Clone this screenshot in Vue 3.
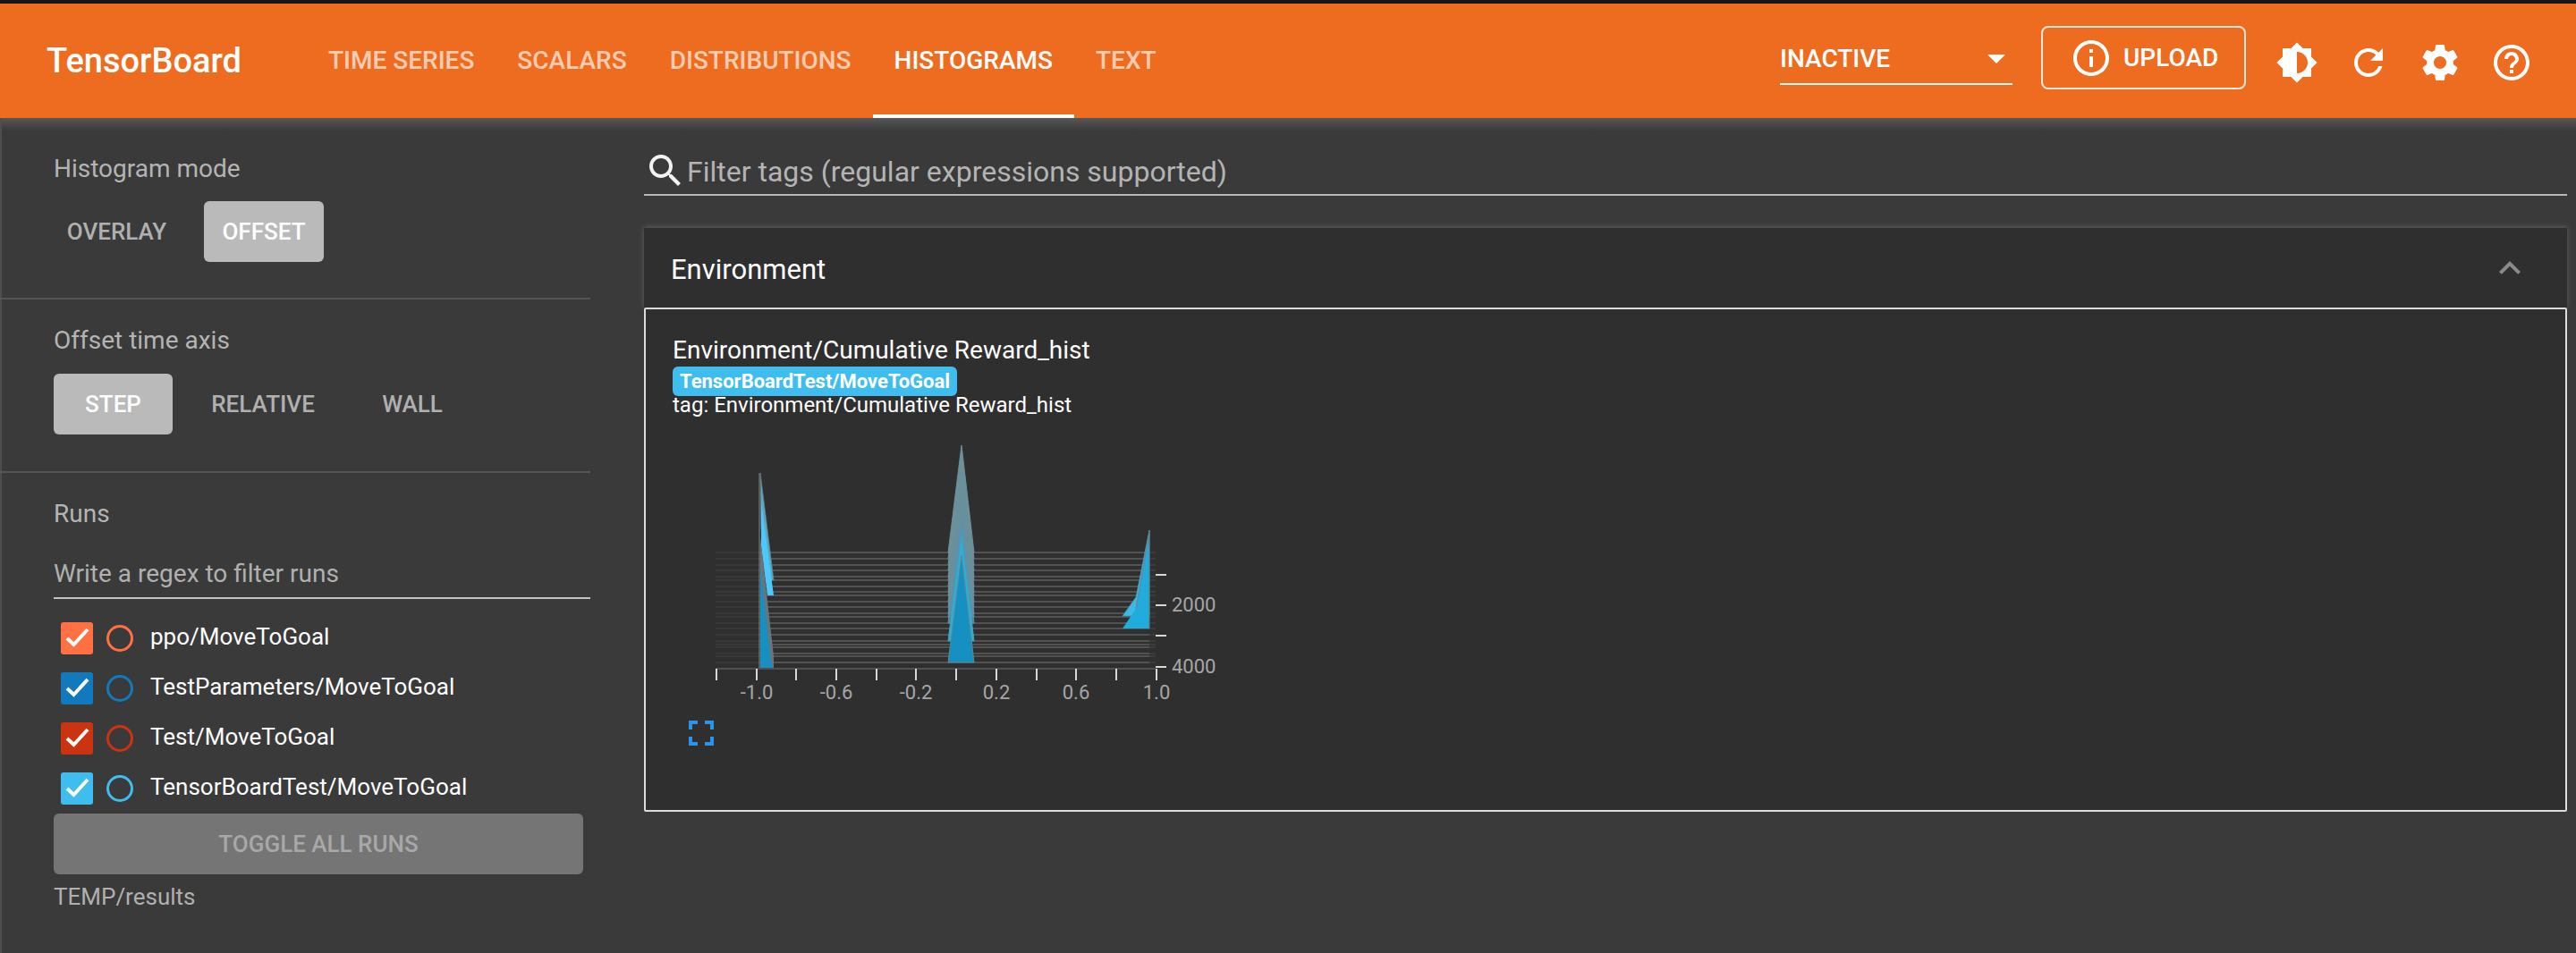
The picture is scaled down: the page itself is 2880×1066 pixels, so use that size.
<script setup>
const tabs = [
  { name: 'TIME SERIES' },
  { name: 'SCALARS' },
  { name: 'DISTRIBUTIONS' },
  { name: 'HISTOGRAMS', active: true },
  { name: 'TEXT' }
]

const runs = [
  { name: 'ppo/MoveToGoal', color: '#ff7043' },
  { name: 'TestParameters/MoveToGoal', color: '#1279bd' },
  { name: 'Test/MoveToGoal', color: '#cc3311' },
  { name: 'TensorBoardTest/MoveToGoal', color: '#3fbdee' }
]

// baselines of each histogram slice, back to front
const baselines = [617, 624, 631, 637, 644, 648, 655, 661, 665, 672, 678, 685, 689, 696, 702, 709, 716, 720, 723, 730, 733, 740, 747]

// back slices are washed out, they get bluer towards the front
const centerBack = baselines.filter(y => y <= 696).map((y, i) => ({
  y,
  points: `1060,${y} 1075,${y - 120} 1089,${y}`,
  fill: `rgb(${114 - i * 3}, ${162 - i}, ${176 + i})`
}))

const xTicks = [801, 846, 890, 935, 980, 1024, 1069, 1114, 1159, 1203, 1248, 1293]
const xLabels = [
  { x: 846, text: '-1.0' },
  { x: 935, text: '-0.6' },
  { x: 1024, text: '-0.2' },
  { x: 1114, text: '0.2' },
  { x: 1203, text: '0.6' },
  { x: 1293, text: '1.0' }
]
const yTicks = [642, 676, 710, 745]
</script>

<template>
  <div class="page">
    <header class="topbar">
      <div class="logo">TensorBoard</div>
      <nav class="tabs">
        <div v-for="tab in tabs" :key="tab.name" class="tab" :class="{ active: tab.active }">{{ tab.name }}</div>
      </nav>
      <div class="topbar-right">
        <div class="plugin-select">
          <span>INACTIVE</span>
          <i class="select-arrow"></i>
        </div>
        <div class="upload-btn">
          <svg class="upload-icon" viewBox="0 0 24 24"><path d="M11 7h2v2h-2zm0 4h2v6h-2zm1-9C6.48 2 2 6.48 2 12s4.48 10 10 10 10-4.48 10-10S17.52 2 12 2zm0 18c-4.41 0-8-3.59-8-8s3.59-8 8-8 8 3.59 8 8-3.59 8-8 8z" /></svg>
          <span>UPLOAD</span>
        </div>
        <div class="icon-row">
          <svg viewBox="0 0 24 24"><path d="M20 15.31L23.31 12 20 8.69V4h-4.69L12 .69 8.69 4H4v4.69L.69 12 4 15.31V20h4.69L12 23.31 15.31 20H20v-4.69zM12 18V6c3.31 0 6 2.69 6 6s-2.69 6-6 6z" /></svg>
          <svg viewBox="0 0 24 24"><path d="M17.65 6.35C16.2 4.9 14.21 4 12 4c-4.42 0-7.99 3.58-7.99 8s3.57 8 7.99 8c3.73 0 6.84-2.55 7.73-6h-2.08c-.82 2.33-3.04 4-5.65 4-3.31 0-6-2.69-6-6s2.69-6 6-6c1.66 0 3.14.69 4.22 1.78L13 11h7V4l-2.35 2.35z" /></svg>
          <svg viewBox="0 0 24 24"><path d="M19.43 12.98c.04-.32.07-.64.07-.98s-.03-.66-.07-.98l2.11-1.65c.19-.15.24-.42.12-.64l-2-3.46c-.12-.22-.39-.3-.61-.22l-2.49 1c-.52-.4-1.08-.73-1.69-.98l-.38-2.65C14.46 2.18 14.25 2 14 2h-4c-.25 0-.46.18-.49.42l-.38 2.65c-.61.25-1.17.59-1.69.98l-2.49-1c-.23-.09-.49 0-.61.22l-2 3.46c-.13.22-.07.49.12.64l2.11 1.65c-.04.32-.07.65-.07.98s.03.66.07.98l-2.11 1.65c-.19.15-.24.42-.12.64l2 3.46c.12.22.39.3.61.22l2.49-1c.52.4 1.08.73 1.69.98l.38 2.65c.03.24.24.42.49.42h4c.25 0 .46-.18.49-.42l.38-2.65c.61-.25 1.17-.59 1.69-.98l2.49 1c.23.09.49 0 .61-.22l2-3.46c.12-.22.07-.49-.12-.64l-2.11-1.65zM12 15.5c-1.93 0-3.5-1.57-3.5-3.5s1.57-3.5 3.5-3.5 3.5 1.57 3.5 3.5-1.57 3.5-3.5 3.5z" /></svg>
          <svg viewBox="0 0 24 24"><path d="M11 18h2v-2h-2v2zm1-16C6.48 2 2 6.48 2 12s4.48 10 10 10 10-4.48 10-10S17.52 2 12 2zm0 18c-4.41 0-8-3.59-8-8s3.59-8 8-8 8 3.59 8 8-3.59 8-8 8zm0-14c-2.21 0-4 1.79-4 4h2c0-1.1.9-2 2-2s2 .9 2 2c0 2-3 1.75-3 5h2c0-2.25 3-2.5 3-5 0-2.21-1.79-4-4-4z" /></svg>
        </div>
      </div>
    </header>

    <div class="body-row">
      <aside class="sidebar">
        <section class="side-block first">
          <div class="side-label">Histogram mode</div>
          <div class="toggle-group">
            <div class="toggle mode-overlay">OVERLAY</div>
            <div class="toggle selected mode-offset">OFFSET</div>
          </div>
        </section>
        <section class="side-block">
          <div class="side-label">Offset time axis</div>
          <div class="toggle-group">
            <div class="toggle selected axis-step">STEP</div>
            <div class="toggle axis-relative">RELATIVE</div>
            <div class="toggle axis-wall">WALL</div>
          </div>
        </section>
        <section class="side-block runs">
          <div class="side-label">Runs</div>
          <div class="regex-input">Write a regex to filter runs</div>
          <div class="run-list">
            <div v-for="run in runs" :key="run.name" class="run-row">
              <div class="run-check" :style="{ background: run.color }">
                <svg viewBox="0 0 36 36"><path d="M7 18l7.5 7L30 8" /></svg>
              </div>
              <div class="run-radio" :style="{ borderColor: run.color }"></div>
              <div class="run-name">{{ run.name }}</div>
            </div>
          </div>
          <div class="toggle-all">TOGGLE ALL RUNS</div>
          <div class="logdir">TEMP/results</div>
        </section>
      </aside>

      <main class="content">
        <div class="filter-row">
          <svg class="search-icon" viewBox="0 0 24 24"><path d="M15.5 14h-.79l-.28-.27C15.41 12.59 16 11.11 16 9.5 16 5.91 13.09 3 9.5 3S3 5.91 3 9.5 5.91 16 9.5 16c1.61 0 3.09-.59 4.23-1.57l.27.28v.79l5 4.99L20.49 19l-4.99-5zm-6 0C7.01 14 5 11.99 5 9.5S7.01 5 9.5 5 14 7.01 14 9.5 11.99 14 9.5 14z" /></svg>
          <span>Filter tags (regular expressions supported)</span>
        </div>

        <section class="category">
          <div class="category-head">
            <span>Environment</span>
            <svg viewBox="0 0 24 24"><path d="M12 8l-6 6 1.41 1.41L12 10.83l4.59 4.58L18 14z" /></svg>
          </div>
          <div class="category-body">
            <div class="card-title">Environment/Cumulative Reward_hist</div>
            <div class="run-pill">TensorBoardTest/MoveToGoal</div>
            <div class="card-tag">tag: Environment/Cumulative Reward_hist</div>

            <svg class="chart" viewBox="780 490 600 300">
              <g v-for="y in baselines" :key="y">
                <line x1="800" x2="848" :y1="y" :y2="y" stroke="#383838" stroke-width="2" />
                <line x1="848" x2="1285" :y1="y" :y2="y" stroke="#525252" stroke-width="2" />
                <line x1="1285" x2="1292" :y1="y" :y2="y" stroke="#3c3c3c" stroke-width="2" />
              </g>

              <!-- spike near -1 -->
              <polygon points="850,528 865,648 859,648 851,590" fill="#5aa9c4" stroke="#66808a" stroke-width="0.8" />
              <polygon points="851,560 865,665 858,665 851,610" fill="#4cc8fb" />
              <polygon points="850,600 865,733 865,747 850,747" fill="#6c7479" />
              <polygon points="850,630 862,740 865,747 850,747" fill="#1590c0" />
              <line x1="849" y1="528" x2="849" y2="747" stroke="#6a6a6a" stroke-width="1.5" />

              <!-- spike at 0 -->
              <polygon
                v-for="s in centerBack"
                :key="s.y"
                :points="s.points"
                :fill="s.fill"
                fill-opacity="0.85"
                stroke="#6c8f9a"
                stroke-width="1"
              />
              <polygon points="1060,716 1075,596 1089,716" fill="#2bb0d8" stroke="#4a9fb5" stroke-width="1" />
              <polygon points="1060,740 1075,620 1089,740" fill="#1590c0" stroke="#5b8797" stroke-width="1" />

              <!-- spike near 1 -->
              <polygon points="1255,688 1270,667 1285,592 1285,688" fill="#3bb9e8" stroke="#4a98b0" stroke-width="0.8" />
              <polygon points="1255,702 1270,680 1285,598 1285,702" fill="#20acdc" />
              <line x1="1270" y1="680" x2="1285" y2="595" stroke="#5e8c9c" stroke-width="1.5" />
              <line x1="1285" y1="592" x2="1285" y2="702" stroke="#6a7a80" stroke-width="1" />

              <line x1="800" x2="1292" y1="747" y2="747" stroke="#505050" stroke-width="2" />
              <line v-for="x in xTicks" :key="x" :x1="x" :x2="x" y1="747" y2="760" stroke="#d8d8d8" stroke-width="2" />
              <line v-for="y in yTicks" :key="y" x1="1292" x2="1304" :y1="y" :y2="y" stroke="#d8d8d8" stroke-width="2" />
              <text v-for="l in xLabels" :key="l.x" class="axis-text" :x="l.x" y="781" text-anchor="middle">{{ l.text }}</text>
              <text class="axis-text" x="1310" y="683">2000</text>
              <text class="axis-text" x="1310" y="752">4000</text>
            </svg>

            <svg class="expand-icon" viewBox="0 0 24 24"><path d="M7 14H5v5h5v-2H7v-3zm-2-4h2V7h3V5H5v5zm12 7h-3v2h5v-5h-2v3zM14 5v2h3v3h2V5h-5z" /></svg>
          </div>
        </section>
      </main>
    </div>
  </div>
</template>

<style>
html,
body {
  margin: 0;
  background: #3a3a3a;
  overflow: hidden;
}
</style>

<style scoped>
.page {
  width: 2880px;
  height: 1066px;
  background: #3a3a3a;
  font-family: Roboto, "Liberation Sans", sans-serif;
  border-top: 4px solid #16161a;
  box-sizing: border-box;
  overflow: hidden;
}

.topbar {
  height: 128px;
  background: #ee6c20;
  display: flex;
  align-items: stretch;
  color: #fff;
}

.logo {
  margin-left: 52px;
  width: 291px;
  font-size: 38px;
  font-weight: 500;
  line-height: 128px;
}

.tabs {
  display: flex;
}

.tab {
  padding: 0 24px;
  font-size: 28px;
  font-weight: 500;
  line-height: 128px;
  height: 128px;
  box-sizing: border-box;
  color: rgba(255, 255, 255, 0.68);
}

.tab.active {
  color: #fff;
  border-bottom: 4px solid #fff;
}

.topbar-right {
  margin-left: auto;
  margin-right: 48px;
  display: flex;
  align-items: flex-start;
}

.plugin-select {
  width: 260px;
  height: 55px;
  padding-top: 8px;
  margin-top: 26px;
  border-bottom: 2px solid #fff;
  display: flex;
  justify-content: space-between;
  align-items: center;
  font-size: 28px;
  font-weight: 500;
  box-sizing: content-box;
}

.select-arrow {
  width: 0;
  height: 0;
  border-left: 10px solid transparent;
  border-right: 10px solid transparent;
  border-top: 10px solid #fff;
  margin-right: 8px;
}

.upload-btn {
  width: 229px;
  height: 71px;
  margin: 25px 33px 0 32px;
  box-sizing: border-box;
  border: 2px solid #f3e9e2;
  border-radius: 8px;
  display: flex;
  align-items: center;
  padding-left: 30px;
  gap: 12px;
  font-size: 28px;
  font-weight: 500;
}

.upload-icon {
  width: 48px;
  height: 48px;
  fill: #fff;
  flex-shrink: 0;
}

.icon-row {
  display: flex;
  gap: 32px;
  margin-top: 42px;
}

.icon-row svg {
  width: 48px;
  height: 48px;
  fill: #fff;
}

.body-row {
  display: flex;
  height: 934px;
  background: linear-gradient(#575757, #3a3a3a 14px);
}

.sidebar {
  width: 720px;
  flex-shrink: 0;
  border-left: 2px solid #4e4e4e;
  box-sizing: border-box;
  padding-right: 60px;
}

.side-block {
  padding: 29px 0 40px 60px;
  height: 194px;
  box-sizing: border-box;
  border-bottom: 2px solid #555;
  margin-left: -2px;
}

.side-block.first {
  padding-top: 40px;
  height: 203px;
}

.side-block.runs {
  border-bottom: none;
  height: auto;
}

.side-label {
  font-size: 28px;
  line-height: 34px;
  color: #b4b4b4;
}

.toggle-group {
  display: flex;
  margin-top: 20px;
}

.side-block.first .toggle-group {
  margin-top: 19px;
}

.toggle {
  height: 68px;
  line-height: 68px;
  font-size: 26px;
  font-weight: 500;
  color: #b0b0b0;
  text-align: center;
  border-radius: 6px;
  box-sizing: border-box;
}

.toggle.selected {
  background: #bababa;
  color: #fff;
}

.mode-overlay {
  width: 141px;
  margin-right: 27px;
}

.mode-offset {
  width: 134px;
}

.axis-step {
  width: 133px;
}

.axis-relative {
  width: 202px;
}

.axis-wall {
  width: 132px;
}

.regex-input {
  margin-top: 26px;
  height: 50px;
  line-height: 48px;
  font-size: 28px;
  color: #b0b0b0;
  border-bottom: 2px solid #c4c4c4;
}

.run-list {
  margin-top: 26px;
  display: flex;
  flex-direction: column;
  gap: 20px;
}

.run-row {
  display: flex;
  align-items: center;
  height: 36px;
  padding-left: 8px;
}

.run-check {
  width: 36px;
  height: 36px;
  border-radius: 3px;
}

.run-check svg {
  display: block;
  width: 36px;
  height: 36px;
  fill: none;
  stroke: #fff;
  stroke-width: 4;
}

.run-radio {
  width: 30px;
  height: 30px;
  border: 3px solid;
  border-radius: 50%;
  box-sizing: border-box;
  margin-left: 15px;
}

.run-name {
  margin-left: 19px;
  font-size: 26px;
  color: #fff;
  margin-top: -5px;
}

.toggle-all {
  margin-top: 10px;
  width: 592px;
  height: 68px;
  line-height: 68px;
  background: #757575;
  border-radius: 6px;
  text-align: center;
  color: #a8a8a8;
  font-size: 26px;
  font-weight: 500;
}

.logdir {
  margin-top: 8px;
  font-size: 26px;
  line-height: 34px;
  color: #b0b0b0;
}

.content {
  flex: 1;
  margin-right: 10px;
}

.filter-row {
  height: 87px;
  box-sizing: border-box;
  border-bottom: 2px solid #b8b8b8;
  display: flex;
  align-items: flex-start;
  color: #b4b4b4;
  font-size: 32px;
  line-height: 40px;
  padding-top: 35px;
}

.filter-row span {
  margin-top: 5px;
}

.search-icon {
  width: 48px;
  height: 48px;
  fill: #f2f2f2;
}

.category {
  margin-top: 36px;
}

.category-head {
  height: 89px;
  box-sizing: border-box;
  padding-top: 4px;
  background: #2f2f2f;
  box-shadow: 0 -1px 6px rgba(255, 255, 255, 0.2);
  display: flex;
  align-items: center;
  justify-content: space-between;
  padding-left: 30px;
  padding-right: 40px;
  color: #fff;
  font-size: 31px;
}

.category-head svg {
  width: 48px;
  height: 48px;
  fill: #8a8a8a;
  margin-top: -4px;
}

.category-body {
  height: 564px;
  box-sizing: border-box;
  background: #2f2f2f;
  border: 2px solid #dcdcdc;
  border-radius: 2px;
  padding: 28px 30px;
}

.card-title {
  color: #fff;
  font-size: 28px;
  line-height: 36px;
}

.run-pill {
  display: inline-block;
  background: #3fbdee;
  color: #fff;
  border-radius: 6px;
  padding: 0 8px;
  height: 33px;
  line-height: 33px;
  font-size: 22px;
  font-weight: 700;
  vertical-align: top;
}

.card-tag {
  color: #fff;
  font-size: 24px;
  line-height: 20px;
}

.chart {
  display: block;
  width: 600px;
  height: 300px;
  margin: 28px 0 0 28px;
}

.axis-text {
  font-family: Roboto, "Liberation Sans", sans-serif;
  font-size: 22px;
  fill: #a6a6a6;
}

.expand-icon {
  display: block;
  width: 48px;
  height: 48px;
  fill: #2b94e8;
  margin: 5px 0 0 8px;
}
</style>
